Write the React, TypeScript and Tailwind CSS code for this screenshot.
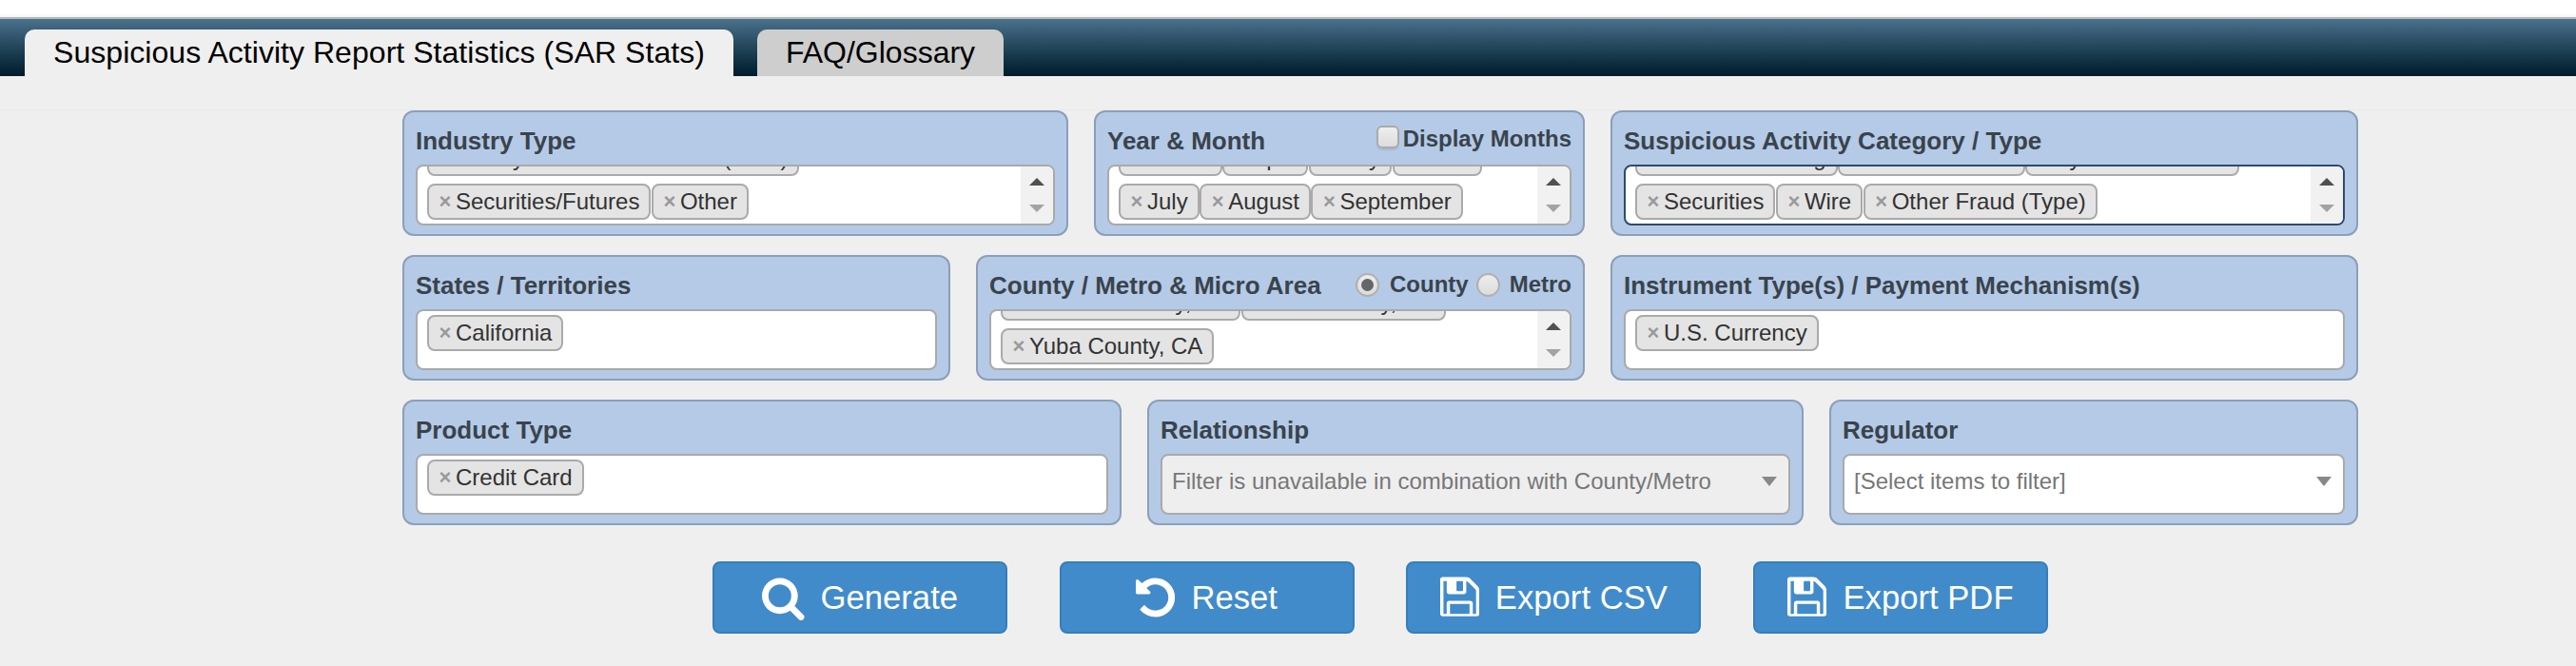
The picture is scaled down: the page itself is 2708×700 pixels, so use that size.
import React from "react";

type IconName = "search" | "undo" | "floppy";

const icons: Record<IconName, { d: string; viewBox: string; width: number }> = {
  search: {
    viewBox: "64 0 1664 1792",
    width: 44.57,
    d: "M1216 832q0-185-131.5-316.5t-316.5-131.5-316.5 131.5-131.5 316.5 131.5 316.5 316.5 131.5 316.5-131.5 131.5-316.5zm512 832q0 52-38 90t-90 38q-54 0-90-38l-343-342q-179 124-399 124-143 0-273.5-55.5t-225-150-150-225-55.5-273.5 55.5-273.5 150-225 225-150 273.5-55.5 273.5 55.5 225 150 150 225 55.5 273.5q0 220-124 399l343 343q37 37 37 90z",
  },
  undo: {
    viewBox: "128 0 1536 1792",
    width: 41.14,
    d: "M1664 896q0 156-61 298t-164 245-245 164-298 61q-172 0-327-72.5t-264-204.5q-7-10-6.5-22.5t8.5-20.5l137-138q10-9 25-9 16 2 23 12 73 95 179 147t225 52q104 0 198.5-40.5t163.5-109.5 109.5-163.5 40.5-198.5-40.5-198.5-109.5-163.5-163.5-109.5-198.5-40.5q-98 0-188 35.5t-160 101.5l137 138q31 30 14 69-17 40-59 40h-448q-26 0-45-19t-19-45v-448q0-42 40-59 39-17 69 14l130 129q107-101 244.5-156.5t284.5-55.5q156 0 298 61t245 164 164 245 61 298z",
  },
  floppy: {
    viewBox: "128 0 1536 1792",
    width: 41.14,
    d: "M512 1536h768v-384h-768v384zm896 0h128v-896q0-14-10-38.5t-20-34.5l-281-281q-10-10-34-20t-39-10v416q0 40-28 68t-68 28h-576q-40 0-68-28t-28-68v-416h-128v1280h128v-416q0-40 28-68t68-28h832q40 0 68 28t28 68v416zm-384-928v-320q0-13-9.5-22.5t-22.5-9.5h-192q-13 0-22.5 9.5t-9.5 22.5v320q0 13 9.5 22.5t22.5 9.5h192q13 0 22.5-9.5t9.5-22.5zm640 32v896q0 40-28 68t-68 28h-1344q-40 0-68-28t-28-68v-1344q0-40 28-68t68-28h928q40 0 88 20t76 48l280 280q28 28 48 76t20 88z",
  },
};

function Tag({ label }: { label: string }) {
  return (
    <li className="flex h-[38px] shrink-0 items-center rounded-lg border-2 border-[#aaaaaa] bg-[#e4e4e4] px-2.5 text-2xl leading-[34px] whitespace-nowrap text-[#333333]">
      <span className="mr-1 w-3.5 text-center text-[22px] font-bold text-[#999999]">×</span>
      {label}
    </li>
  );
}

function Triangle({ up, className }: { up?: boolean; className: string }) {
  return (
    <svg viewBox="0 0 16 8" className={className} fill="currentColor">
      <path d={up ? "M8 0L16 8H0Z" : "M0 0H16L8 8Z"} />
    </svg>
  );
}

function TagBox({ rows, focused }: { rows: string[][]; focused?: boolean }) {
  const scrolls = rows.length > 1;
  return (
    <div
      className={`flex h-16 overflow-hidden rounded-lg border-2 bg-white ${
        focused ? "border-[#2f4a6b]" : "border-[#aaaaaa]"
      }`}
    >
      <div className={`flex flex-1 flex-col gap-2 pl-2.5 ${scrolls ? "justify-end pb-1" : "pt-1"}`}>
        {rows.map((row) => (
          <ul key={row[0]} className="flex gap-[0.5px]">
            {row.map((label) => (
              <Tag key={label} label={label} />
            ))}
          </ul>
        ))}
      </div>
      {scrolls && (
        <div className="flex w-[34px] flex-col items-center gap-5 bg-[#f1f1f1] pt-3">
          <Triangle up className="h-2 w-4 text-[#505050]" />
          <Triangle className="h-2 w-4 text-[#a3a3a3]" />
        </div>
      )}
    </div>
  );
}

function SelectBox({ text, disabled }: { text: string; disabled?: boolean }) {
  return (
    <div
      className={`flex h-16 items-start justify-between rounded-lg border-2 border-[#aaaaaa] pt-[13px] pr-3 pl-2.5 text-2xl leading-7 text-[#777777] ${
        disabled ? "bg-[#eeeeee]" : "bg-white"
      }`}
    >
      <span className="whitespace-nowrap">{text}</span>
      <svg viewBox="0 0 16 10" className="mt-[9px] h-2.5 w-4" fill="#888888">
        <path d="M0 0H16L8 10Z" />
      </svg>
    </div>
  );
}

function Panel({
  title,
  width,
  extra,
  children,
}: {
  title: string;
  width: string;
  extra?: React.ReactNode;
  children: React.ReactNode;
}) {
  return (
    <section
      className={`h-[132px] shrink-0 rounded-xl border-2 border-[#8b9fb8] bg-[#b4cae7] px-3 text-[#3a434c] ${width}`}
    >
      <div className="flex h-[55px] items-start justify-between pt-[15px]">
        <h2 className="text-[26px] leading-[30px] font-bold whitespace-nowrap">{title}</h2>
        {extra}
      </div>
      {children}
    </section>
  );
}

function Radio({ checked }: { checked?: boolean }) {
  return (
    <span className="flex size-[25px] items-center justify-center rounded-full border-2 border-[#b0b0b0] bg-linear-to-b from-[#ededed] to-[#dcdcdc]">
      {checked && <span className="size-[13px] rounded-full bg-[#666666]" />}
    </span>
  );
}

function ActionButton({ icon, label }: { icon: IconName; label: string }) {
  const { d, viewBox, width } = icons[icon];
  return (
    <button className="flex h-[76px] w-[310px] items-center justify-center gap-[17px] rounded-lg border-2 border-[#357ebd] bg-[#428bca] text-[34.67px] leading-10 text-white">
      <svg viewBox={viewBox} width={width} height={48} fill="currentColor">
        <path d={d} />
      </svg>
      <span className="whitespace-nowrap">{label}</span>
    </button>
  );
}

export default function App() {
  return (
    <div className="h-[700px] w-[2708px] overflow-hidden bg-[#efefef] font-['Liberation_Sans',Arial,sans-serif]">
      <div className="h-[18px] bg-linear-to-b from-white from-80% to-[#f2f2f2]" />
      <nav className="flex h-[62px] items-end gap-[25px] border-t-2 border-[#b3b8b5] bg-linear-to-b from-[#4a728d] to-[#001c2b] pl-[26px]">
        <a className="h-[49px] w-[745px] rounded-t-[10px] bg-[#efefef] text-center text-[32px] leading-[49px] tracking-[0.04px] whitespace-nowrap text-black">
          Suspicious Activity Report Statistics (SAR Stats)
        </a>
        <a className="h-[49px] w-[259px] rounded-t-[10px] bg-[#cecece] text-center text-[32px] leading-[49px] whitespace-nowrap text-black">
          FAQ/Glossary
        </a>
      </nav>
      <div className="h-9 border-b border-[#e9e9e9]" />

      <main className="ml-[423px] flex w-[2056px] flex-col gap-5">
        <div className="flex gap-[27px]">
          <Panel title="Industry Type" width="w-[700px]">
            <TagBox rows={[["Money Services Business (MSB)"], ["Securities/Futures", "Other"]]} />
          </Panel>
          <Panel
            title="Year & Month"
            width="w-[516px]"
            extra={
              <label className="flex items-start gap-1 text-2xl leading-[26px] font-bold">
                <span className="-mt-px size-6 rounded-md border-2 border-[#aaaaaa] bg-linear-to-b from-[#eeeeee] to-[#dcdcdc] shadow-[0_2px_1px_rgba(0,0,0,0.08)]" />
                Display Months
              </label>
            }
          >
            <TagBox
              rows={[
                ["March", "April", "May", "June"],
                ["July", "August", "September"],
              ]}
            />
          </Panel>
          <Panel title="Suspicious Activity Category / Type" width="w-[786px]">
            <TagBox
              focused
              rows={[
                ["Mass-Marketing", "Ponzi Scheme", "Pyramid Scheme"],
                ["Securities", "Wire", "Other Fraud (Type)"],
              ]}
            />
          </Panel>
        </div>

        <div className="flex gap-[27px]">
          <Panel title="States / Territories" width="w-[576px]">
            <TagBox rows={[["California"]]} />
          </Panel>
          <Panel
            title="County / Metro & Micro Area"
            width="w-[640px]"
            extra={
              <div className="flex items-center gap-2 pt-px text-2xl leading-[26px] font-bold">
                <label className="flex items-center gap-[11px]">
                  <Radio checked />
                  County
                </label>
                <label className="flex items-center gap-[10px]">
                  <Radio />
                  Metro
                </label>
              </div>
            }
          >
            <TagBox rows={[["Ventura County, CA", "Yolo County, CA"], ["Yuba County, CA"]]} />
          </Panel>
          <Panel title="Instrument Type(s) / Payment Mechanism(s)" width="w-[786px]">
            <TagBox rows={[["U.S. Currency"]]} />
          </Panel>
        </div>

        <div className="flex gap-[27px]">
          <Panel title="Product Type" width="w-[756px]">
            <TagBox rows={[["Credit Card"]]} />
          </Panel>
          <Panel title="Relationship" width="w-[690px]">
            <SelectBox disabled text="Filter is unavailable in combination with County/Metro" />
          </Panel>
          <Panel title="Regulator" width="w-[556px]">
            <SelectBox text="[Select items to filter]" />
          </Panel>
        </div>
      </main>

      <div className="mt-[38px] ml-[749px] flex w-[1404px] justify-between">
        <ActionButton icon="search" label="Generate" />
        <ActionButton icon="undo" label="Reset" />
        <ActionButton icon="floppy" label="Export CSV" />
        <ActionButton icon="floppy" label="Export PDF" />
      </div>
    </div>
  );
}
